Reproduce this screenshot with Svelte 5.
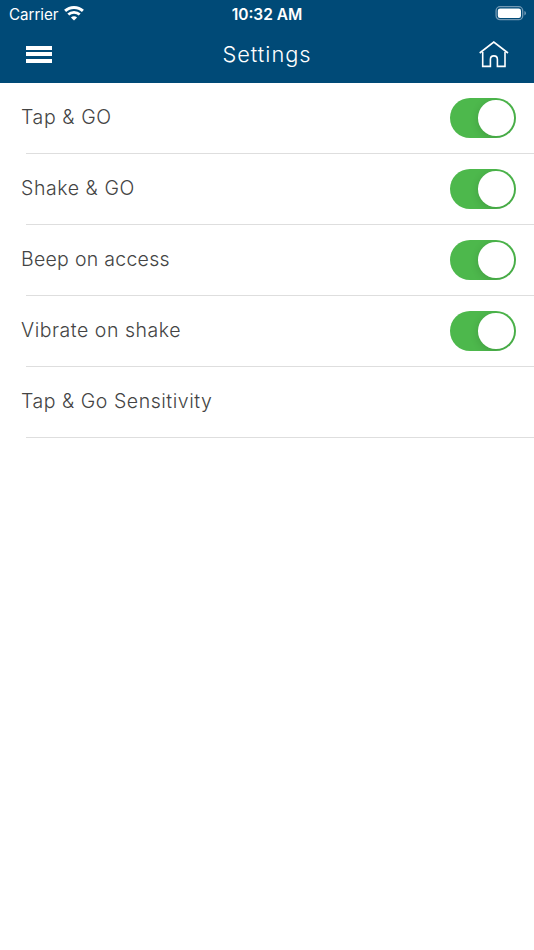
<script>
  let rows = $state([
    { label: 'Tap & GO', on: true, spacing: 0.6 },
    { label: 'Shake & GO', on: true, spacing: 0.57 },
    { label: 'Beep on access', on: true, spacing: 0.28 },
    { label: 'Vibrate on shake', on: true, spacing: 0.53 },
    { label: 'Tap & Go Sensitivity', on: null, spacing: 0.54 }
  ]);
</script>

<div class="screen">
  <header>
    <div class="status">
      <div class="carrier">
        <span>Carrier</span>
        <svg width="20" height="15" viewBox="0 0 20 15" fill="none" stroke="#fff">
          <path d="M1.1 4.9C6 .3 14 .3 18.9 4.9" stroke-width="2.9" />
          <path d="M4.3 8.6C7.4 5.7 12.6 5.7 15.7 8.6" stroke-width="2.8" />
          <path d="M10 14.6 6.9 11.5C8.6 9.8 11.4 9.8 13.1 11.5Z" fill="#fff" stroke="none" />
        </svg>
      </div>
      <div class="time">10:32 AM</div>
      <div class="battery">
        <svg width="32" height="15" viewBox="0 0 32 15">
          <rect x="1.1" y=".7" width="26.6" height="13" rx="4" fill="none" stroke="#7299b4" stroke-width="1.3" />
          <rect x="2.8" y="2.4" width="23.2" height="9.6" rx="2.3" fill="#fff" />
          <path d="M29.4 5Q31 5.6 31 7.2T29.4 9.4Z" fill="#7299b4" />
        </svg>
      </div>
    </div>
    <nav>
      <button class="menu" aria-label="Menu"><i></i><i></i><i></i></button>
      <h1>Settings</h1>
      <button class="home" aria-label="Home">
        <svg width="30" height="28" viewBox="0 0 30 28" fill="none" stroke="#fff" stroke-width="1.6">
          <path d="M.7 12 14.8 1 29 12" />
          <path d="M3.7 11V25.4H11.4V18.4Q11.4 14.9 14.9 14.9T18.4 18.4V25.4H26V11" />
        </svg>
      </button>
    </nav>
  </header>
  <main>
    {#each rows as row}
      <div class="row">
        <span class="label" style="letter-spacing: {row.spacing}px">{row.label}</span>
        {#if row.on !== null}
          <button class="toggle" class:on={row.on} role="switch" aria-checked={row.on} aria-label={row.label} onclick={() => (row.on = !row.on)}>
            <span class="knob"></span>
          </button>
        {/if}
      </div>
    {/each}
  </main>
</div>

<style>
  .screen { min-height: 950px; background: #fff; font-family: Inter, sans-serif; overflow: hidden; }
  header { height: 83px; background: #004a77; color: #fff; }
  button { border: 0; padding: 0; background: none; }
  svg { display: block; }
  .status { height: 28px; padding: 0 7px 0 9px; display: grid; grid-template-columns: 1fr auto 1fr; align-items: center; }
  .carrier { display: flex; gap: 6px; align-items: center; font-size: 15.2px; letter-spacing: -0.05px; }
  .carrier svg { margin-top: -2px; }
  .time { font-size: 15.5px; font-weight: 600; letter-spacing: 0; margin-right: 2px; }
  .battery { display: flex; justify-content: flex-end; margin-top: -1px; }
  nav { height: 55px; padding: 0 25px 0 26px; display: grid; grid-template-columns: 1fr auto 1fr; align-items: center; }
  .menu { display: flex; flex-direction: column; gap: 2.5px; width: 26px; margin-top: -3px; }
  .menu i { height: 4px; background: #fff; }
  h1 { margin: -4px 0 0 -1px; font-size: 21.8px; font-weight: 300; letter-spacing: 1px; }
  .home { justify-self: end; margin-top: -2px; }
  .row { height: 71px; padding: 0 18px 2px 21px; box-sizing: border-box; display: flex; align-items: center; justify-content: space-between; background: linear-gradient(#dedede, #dedede) 26px 70px / 100% 1px no-repeat; }
  .label { font-size: 19.5px; font-weight: 300; color: #444; white-space: nowrap; margin-top: -2px; }
  .toggle { width: 66px; height: 40px; border-radius: 20px; background: #ddd; padding: 0 2.5px; display: flex; align-items: center; overflow: hidden; }
  .toggle.on { background: #4db84c; justify-content: flex-end; }
  .knob { width: 35.5px; height: 35.5px; margin-top: 1px; border-radius: 50%; background: #fff; box-shadow: 0 2px 8px rgba(0, 0, 0, 0.14); }
</style>
